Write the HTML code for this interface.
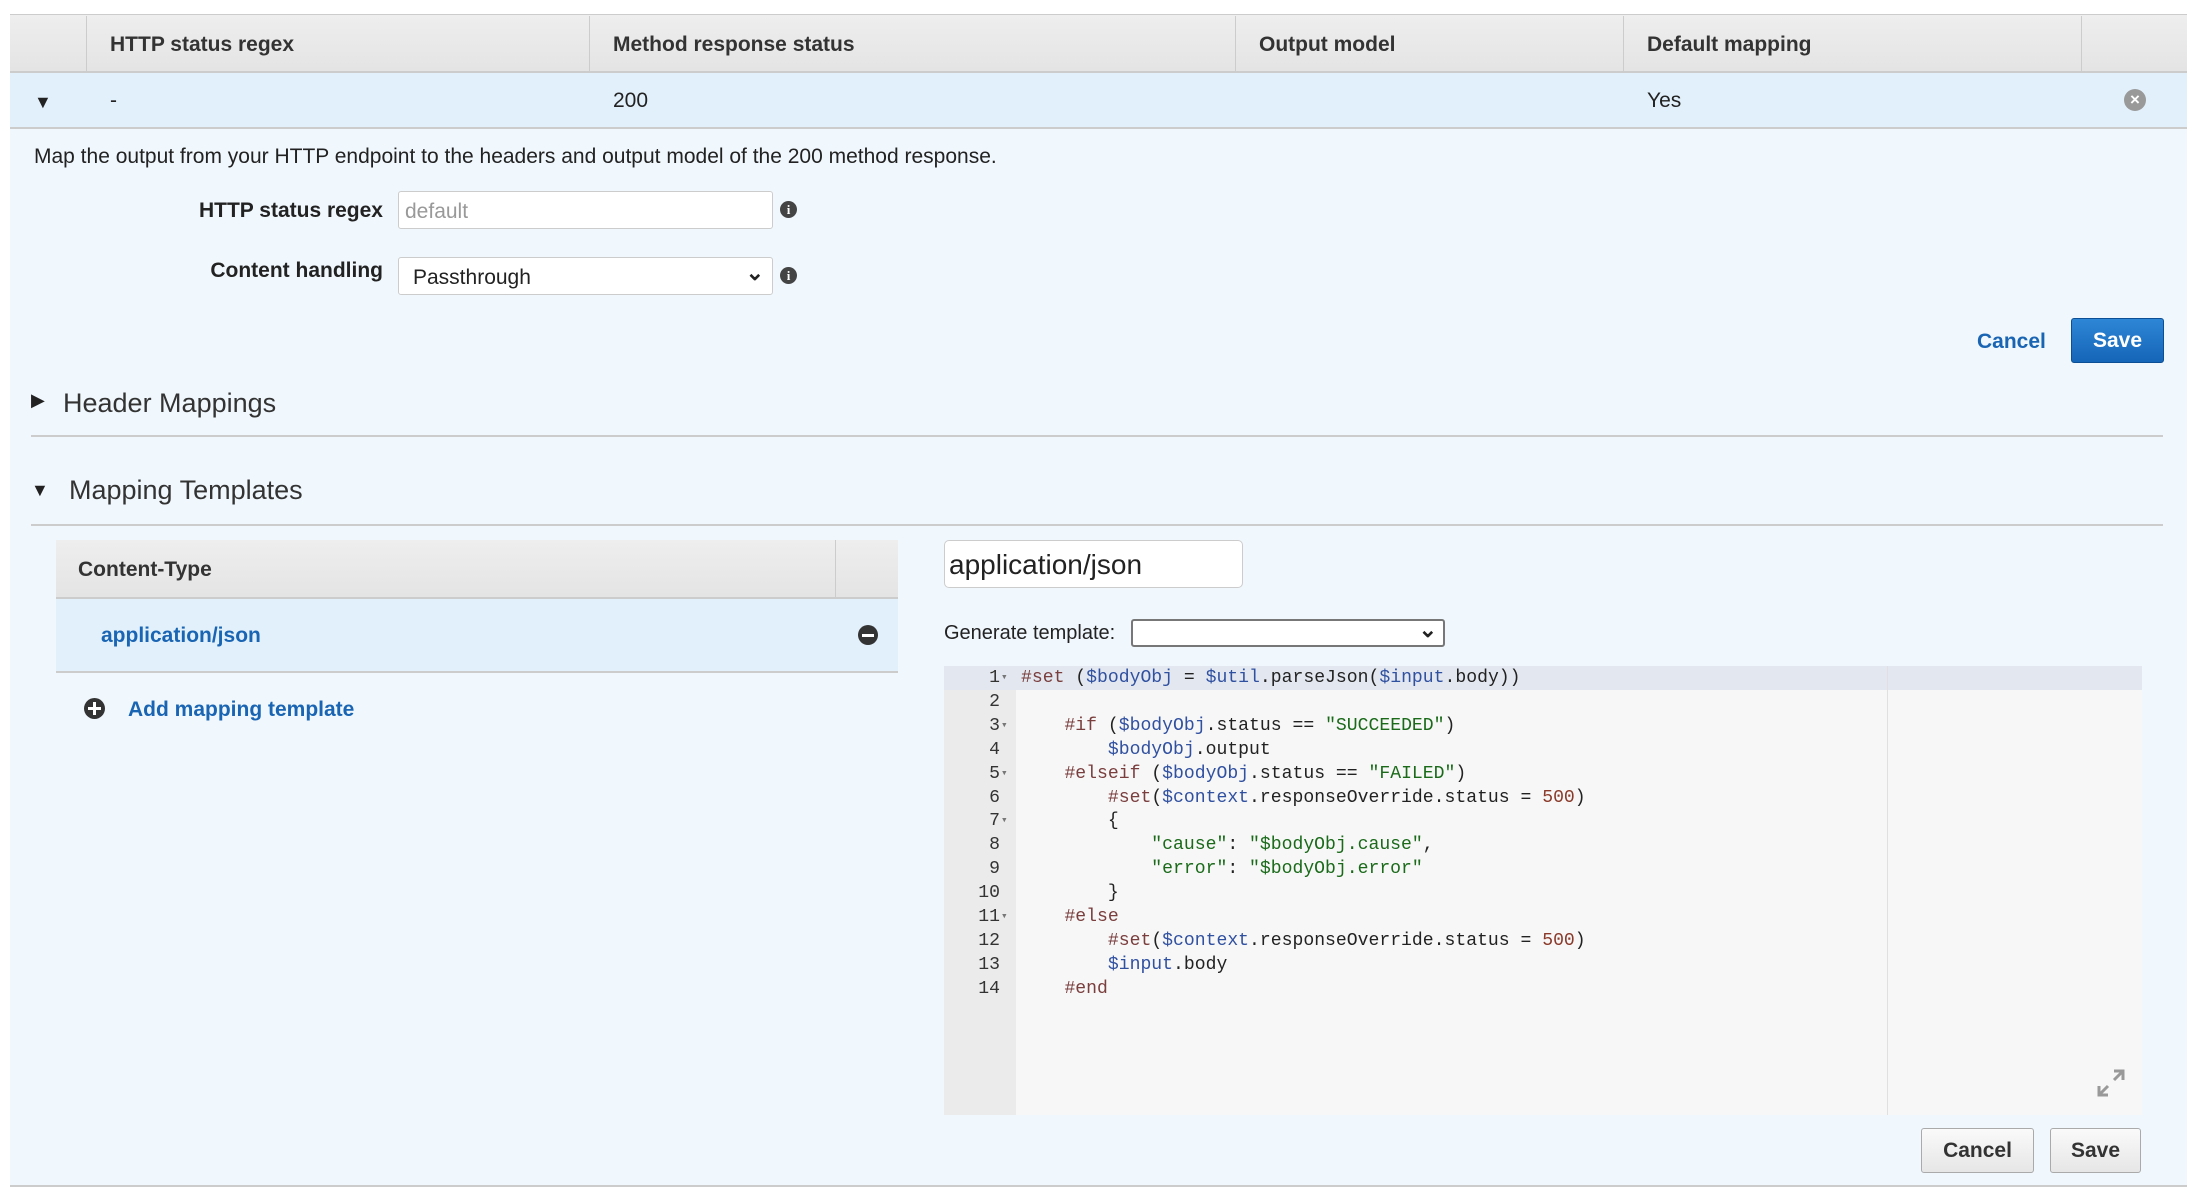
<!DOCTYPE html>
<html><head><meta charset="utf-8"><style>
*{box-sizing:border-box;margin:0;padding:0}
body{width:2200px;height:1202px;background:#fff;font-family:"Liberation Sans",Arial,sans-serif;color:#222;position:relative;overflow:hidden}
.a{position:absolute}
.hdr{left:10px;top:14px;width:2177px;height:59px;background:linear-gradient(#eee,#e4e4e4);border-top:1px solid #ccc;border-bottom:2px solid #ccc}
.hdr div{position:absolute;top:1px;height:57px;border-left:1px solid #ccc;font-weight:bold;font-size:21px;line-height:57px;padding-left:23px;color:#333}
.row{left:10px;top:73px;width:2177px;height:56px;background:#e2f0fb;border-bottom:2px solid #ccc;font-size:21px;line-height:56px}
.panel{left:10px;top:129px;width:2177px;height:1058px;background:#f0f7fd;border-bottom:2px solid #ccc}
.lbl{font-weight:bold;font-size:21px;text-align:right;color:#222}
.inp{background:#fff;border:1px solid #ccc;border-radius:3px}
.info{width:17px;height:17px;border-radius:50%;background:#444;color:#fff;font-size:13px;font-weight:bold;text-align:center;line-height:17px;font-family:"Liberation Serif",serif}
.code{font-family:"Liberation Mono",monospace;font-size:18.1px;line-height:23.9px;white-space:pre}
.k{color:#7a3e3e}.v{color:#3050a0}.s{color:#1a6a1a}.n{color:#8a3a2a}
.btn{background:linear-gradient(#fafafa,#e6e6e6);border:1px solid #aaa;border-radius:3px;font-weight:bold;font-size:21px;text-align:center;color:#333}
</style></head><body>
<div class="a hdr">
<div style="left:76px;border-left:1px solid #ccc">HTTP status regex</div>
<div style="left:579px">Method response status</div>
<div style="left:1225px">Output model</div>
<div style="left:1613px">Default mapping</div>
<div style="left:2071px;width:106px"></div>
</div>
<div class="a row">
<span class="a" style="left:24px;top:1px;font-size:18px">&#9660;</span>
<span class="a" style="left:100px">-</span>
<span class="a" style="left:603px">200</span>
<span class="a" style="left:1637px">Yes</span>
<span class="a" style="left:2114px;top:16px;width:22px;height:22px;border-radius:50%;background:#999;color:#fff;font-size:17px;line-height:22px;text-align:center;font-weight:bold">×</span>
</div>
<div class="a panel"></div>
<div class="a" style="left:34px;top:145px;font-size:21px">Map the output from your HTTP endpoint to the headers and output model of the 200 method response.</div>
<div class="a lbl" style="left:100px;width:283px;top:199px">HTTP status regex</div>
<div class="a inp" style="left:398px;top:191px;width:375px;height:38px;font-size:21px;color:#999;padding:8px 6px">default</div>
<div class="a info" style="left:780px;top:201px">i</div>
<div class="a lbl" style="left:100px;width:283px;top:259px">Content handling</div>
<div class="a inp" style="left:398px;top:257px;width:375px;height:38px;font-size:21px;padding:8px 14px">Passthrough<span class="a" style="right:8px;top:2px;font-size:22px;font-weight:bold">&#8964;</span></div>
<div class="a info" style="left:780px;top:267px">i</div>
<div class="a" style="left:1977px;top:330px;font-size:21px;font-weight:bold;color:#1a65b3">Cancel</div>
<div class="a" style="left:2071px;top:318px;width:93px;height:45px;background:linear-gradient(#2e86d6,#1565b8);border:1px solid #0d4f94;border-radius:3px;color:#fff;font-weight:bold;font-size:21px;text-align:center;line-height:43px">Save</div>
<div class="a" style="left:31px;top:390px;font-size:18px">&#9654;</div>
<div class="a" style="left:63px;top:388px;font-size:27px;color:#333">Header Mappings</div>
<div class="a" style="left:31px;top:435px;width:2132px;height:2px;background:#ccc"></div>
<div class="a" style="left:31px;top:480px;font-size:18px">&#9660;</div>
<div class="a" style="left:69px;top:475px;font-size:27px;color:#333">Mapping Templates</div>
<div class="a" style="left:31px;top:524px;width:2132px;height:2px;background:#ccc"></div>
<div class="a" style="left:56px;top:540px;width:842px;height:59px;background:linear-gradient(#eee,#e4e4e4);border-bottom:2px solid #ccc;font-weight:bold;font-size:21px;line-height:59px;padding-left:22px;color:#333">Content-Type<div class="a" style="left:779px;top:0;width:1px;height:57px;background:#ccc"></div></div>
<div class="a" style="left:56px;top:599px;width:842px;height:74px;background:#e2f0fb;border-bottom:2px solid #ccc;font-weight:bold;font-size:21px;line-height:74px;padding-left:45px;color:#1a65b3">application/json<span class="a" style="left:802px;top:26px;width:20px;height:20px;border-radius:50%;background:#333"><span class="a" style="left:4px;top:9px;width:12px;height:3px;background:#fff"></span></span></div>
<div class="a" style="left:84px;top:698px;width:21px;height:21px;border-radius:50%;background:#333"><span class="a" style="left:4px;top:9px;width:13px;height:3px;background:#fff"></span><span class="a" style="left:9px;top:4px;width:3px;height:13px;background:#fff"></span></div>
<div class="a" style="left:128px;top:698px;font-size:21px;font-weight:bold;color:#1a65b3">Add mapping template</div>
<div class="a inp" style="left:944px;top:540px;width:299px;height:48px;font-size:28px;padding:8px 4px;border-radius:5px">application/json</div>
<div class="a" style="left:944px;top:622px;font-size:20px">Generate template:</div>
<div class="a" style="left:1131px;top:619px;width:314px;height:28px;background:#fff;border:2px solid #777;border-radius:3px"><span class="a" style="right:6px;top:-4px;font-size:22px;font-weight:bold">&#8964;</span></div>
<div class="a" style="left:944px;top:666px;width:1198px;height:449px;background:#f7f7f7"></div>
<div class="a" style="left:944px;top:666px;width:72px;height:449px;background:#ebebeb"></div>
<div class="a" style="left:944px;top:666px;width:1198px;height:24px;background:#e3e8f0"></div>
<div class="a" style="left:1887px;top:666px;width:1px;height:449px;background:#e0e0e0"></div>
<div class="a code" style="left:944px;top:667px;width:56px;text-align:right;color:#333">1
2
3
4
5
6
7
8
9
10
11
12
13
14</div>
<div class="a code" style="left:1001px;top:667px;font-size:11px;color:#777;line-height:23.9px">▾
 
▾
 
▾
 
▾
 
 
 
▾</div>
<div class="a code" style="left:1021px;top:667px;color:#222"><span class="k">#set</span> (<span class="v">$bodyObj</span> = <span class="v">$util</span>.parseJson(<span class="v">$input</span>.body))

    <span class="k">#if</span> (<span class="v">$bodyObj</span>.status == <span class="s">"SUCCEEDED"</span>)
        <span class="v">$bodyObj</span>.output
    <span class="k">#elseif</span> (<span class="v">$bodyObj</span>.status == <span class="s">"FAILED"</span>)
        <span class="k">#set</span>(<span class="v">$context</span>.responseOverride.status = <span class="n">500</span>)
        {
            <span class="s">"cause"</span>: <span class="s">"$bodyObj.cause"</span>,
            <span class="s">"error"</span>: <span class="s">"$bodyObj.error"</span>
        }
    <span class="k">#else</span>
        <span class="k">#set</span>(<span class="v">$context</span>.responseOverride.status = <span class="n">500</span>)
        <span class="v">$input</span>.body
    <span class="k">#end</span></div>
<svg class="a" style="left:2096px;top:1068px" width="30" height="30" viewBox="0 0 30 30"><path d="M18 3h9v9M27 3l-9 9M3 18v9h9M3 27l9-9" stroke="#999" stroke-width="3" fill="none"/></svg>
<div class="a btn" style="left:1921px;top:1128px;width:113px;height:45px;line-height:43px">Cancel</div>
<div class="a btn" style="left:2050px;top:1128px;width:91px;height:45px;line-height:43px">Save</div>
</body></html>
